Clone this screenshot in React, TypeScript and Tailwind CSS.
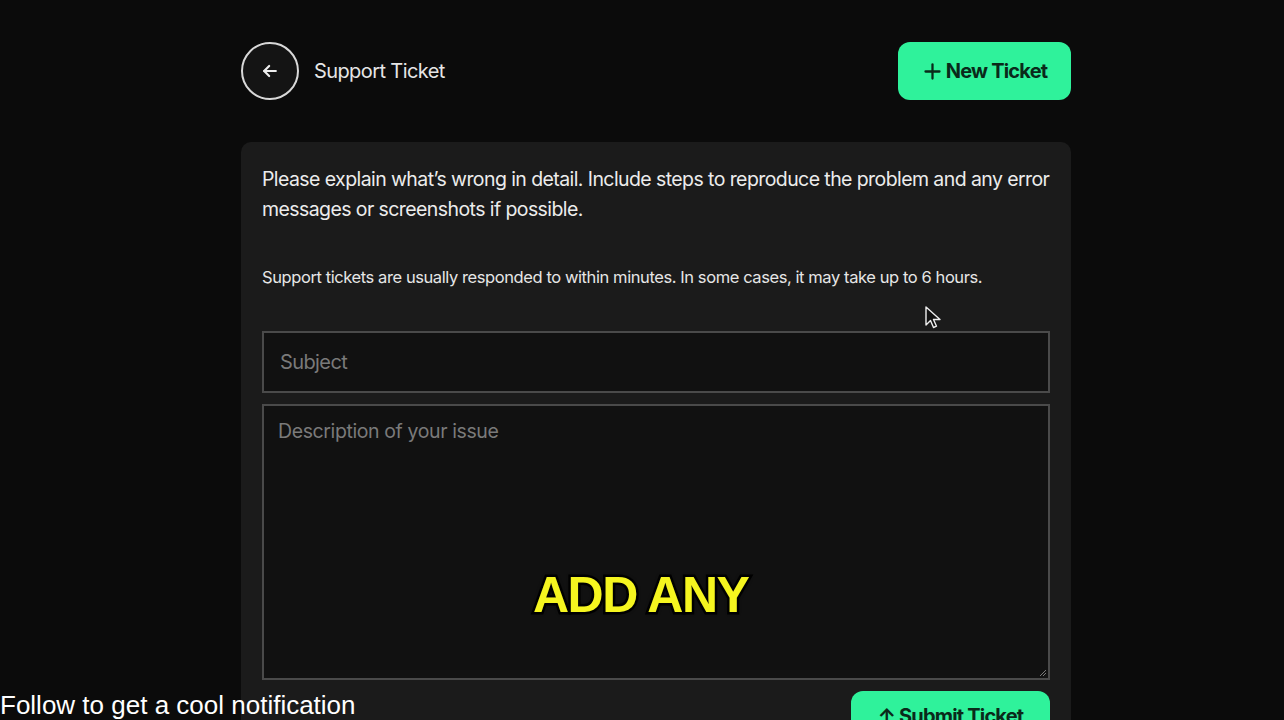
import React from "react";

const App: React.FC = () => {
  return (
    <div className="relative h-[720px] w-[1284px] overflow-hidden bg-[#0b0b0b] font-['Inter',sans-serif] text-white">
      <div className="ml-[241px] w-[830px] pt-[42px]">
        {/* Header */}
        <div className="flex items-center justify-between">
          <div className="flex items-center gap-[15px]">
            <button className="flex h-[58px] w-[58px] items-center justify-center rounded-full border-[2px] border-[#d8d8d8] bg-[#141414]">
              <svg width="20" height="20" viewBox="0 0 24 24" fill="none" stroke="#eeeeee" strokeWidth="2.6" strokeLinecap="round" strokeLinejoin="round">
                <path d="M19 12H5" />
                <path d="M11 6l-6 6 6 6" />
              </svg>
            </button>
            <span className="text-[20px] tracking-[-0.03em] text-[#e6e6e6]">Support Ticket</span>
          </div>
          <button className="flex h-[58px] w-[173px] items-center justify-center gap-[3px] rounded-[12px] bg-[#2ff29b] text-[20px] font-bold tracking-[-0.04em] text-[#0a2a1a]">
            <svg width="21" height="21" viewBox="0 0 24 24" fill="none" stroke="#0a2a1a" strokeWidth="2.6" strokeLinecap="round">
              <path d="M12 4v16" />
              <path d="M4 12h16" />
            </svg>
            New Ticket
          </button>
        </div>

        {/* Card */}
        <div className="mt-[42px] rounded-[10px] bg-[#1b1b1b] px-[21px] pt-[22px] pb-[40px]">
          <p className="text-[19.5px] leading-[30px] tracking-[-0.03em] text-[#ececec]">
            Please explain what’s wrong in detail. Include steps to reproduce the problem and any error messages or screenshots if possible.
          </p>
          <p className="mt-[41px] text-[16.5px] leading-[24px] tracking-[-0.025em] text-[#e6e6e6]">
            Support tickets are usually responded to within minutes. In some cases, it may take up to 6 hours.
          </p>
          <div className="mt-[42px] flex h-[62px] items-center border-[2px] border-[#4a4a4a] bg-[#111111] px-[16px] text-[20px] tracking-[-0.03em] text-[#7a7a7a]">
            Subject
          </div>
          <div className="relative mt-[11px] h-[276px] border-[2px] border-[#4a4a4a] bg-[#111111] px-[14px] pt-[11px] text-[19.5px] tracking-[-0.02em] text-[#7a7a7a]">
            Description of your issue
            <svg className="absolute right-[1px] bottom-[1px]" width="9" height="9" viewBox="0 0 9 9" stroke="#777" strokeWidth="1">
              <path d="M8 2L2 8M8 5L5 8" />
            </svg>
          </div>
          <div className="mt-[11px] flex justify-end">
            <button className="flex h-[58px] w-[199px] items-start justify-center gap-[4px] rounded-[12px] bg-[#2ff29b] pt-[10px] text-[20px] font-bold tracking-[-0.04em] text-[#0a2a1a]">
              <span>↑</span>
              Submit Ticket
            </button>
          </div>
        </div>
      </div>

      {/* Cursor overlay */}
      <svg className="absolute left-[925px] top-[306px]" width="16" height="24" viewBox="0 0 16 24">
        <path d="M1 1v18l4.5-4.5 3 7 3-1.3-3-6.7H15z" fill="#111" stroke="#eee" strokeWidth="1.4" strokeLinejoin="round" />
      </svg>

      {/* Video caption overlay */}
      <div className="absolute left-[533px] top-[567px] font-['Liberation_Sans',sans-serif] text-[50px] leading-[56px] font-bold tracking-[-0.03em] text-[#f5f51f] [paint-order:stroke_fill] [-webkit-text-stroke:5px_#000] [text-shadow:0_0_4px_#000]">
        ADD ANY
      </div>

      {/* Follow banner */}
      <div className="absolute left-0 top-[689px] font-['Liberation_Sans',sans-serif] text-[26px] leading-[32px] text-white">
        Follow to get a cool notification
      </div>
    </div>
  );
};

export default App;
